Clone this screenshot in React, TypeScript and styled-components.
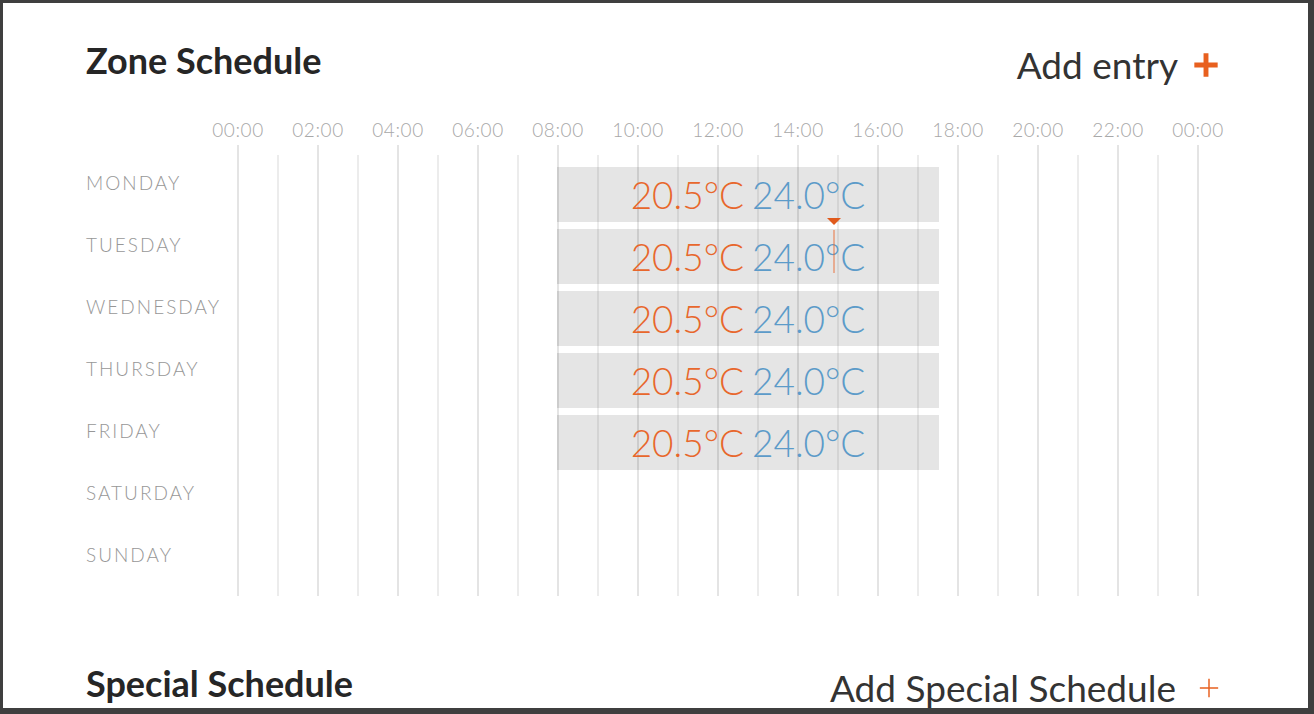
import React, { FC } from 'react';

import styled, { createGlobalStyle } from 'styled-components';

const HOUR = 40;

const GlobalStyle = createGlobalStyle`
  html, body {
    margin: 0;
    padding: 0;
    background: #ffffff;
  }

  body {
    font-family: Lato, 'Open Sans', 'Liberation Sans', sans-serif;
  }
`;

const Frame = styled.div`
  width: 1314px;
  height: 714px;
  box-sizing: border-box;
  border-style: solid;
  border-color: #3f3f3f;
  border-width: 3px 6px 6px 3px;
  padding: 0 88px 0 83px;
  overflow: hidden;
  background: #ffffff;
`;

const Header = styled.div<{ $top: number }>`
  display: flex;
  justify-content: space-between;
  align-items: flex-start;
  margin-top: ${({ $top }) => $top}px;
`;

const Title = styled.h2`
  margin: 0;
  font-size: 36px;
  line-height: 42px;
  font-weight: 700;
  color: #262626;
`;

const AddButton = styled.button<{ $gap: number }>`
  display: flex;
  align-items: center;
  gap: ${({ $gap }) => $gap}px;
  padding: 5px 0 0 0;
  border: 0;
  background: none;
  font-family: inherit;
  font-size: 37px;
  line-height: 42px;
  color: #333333;
  cursor: pointer;
`;

const Schedule = styled.div`
  display: grid;
  grid-template-columns: 151px 962px;
  margin-top: 29px;
`;

const Axis = styled.div`
  grid-column: 2;
  display: grid;
  grid-template-columns: repeat(13, 80px);
  margin-left: -39px;
  height: 30px;
`;

const AxisLabel = styled.span`
  text-align: center;
  font-size: 19px;
  line-height: 30px;
  font-weight: 300;
  color: #a8a8a8;
  letter-spacing: 0.6px;
`;

const Days = styled.div`
  grid-column: 1;
  display: flex;
  flex-direction: column;
  padding-top: 22px;
`;

const DayLabel = styled.div`
  height: 62px;
  padding-top: 4px;
  box-sizing: border-box;
  font-size: 19px;
  line-height: 24px;
  font-weight: 300;
  color: #979797;
  letter-spacing: 2px;
`;

const Timeline = styled.div`
  grid-column: 2;
  position: relative;
  height: 451px;
  padding-top: 22px;
  box-sizing: border-box;
  background-image: repeating-linear-gradient(
      to right,
      #e4e4e4 0,
      #e4e4e4 2px,
      transparent 2px,
      transparent 80px
    ),
    repeating-linear-gradient(
      to right,
      #ececec 0,
      #ececec 2px,
      transparent 2px,
      transparent 80px
    );
  background-repeat: no-repeat;
  background-size: 100% 100%, 100% calc(100% - 10px);
  background-position: 0 0, 40px 10px;
`;

const Row = styled.div`
  height: 62px;
`;

const Bar = styled.div`
  height: 55px;
  background: rgba(0, 0, 0, 0.1);
  display: flex;
  justify-content: center;
  align-items: center;
  gap: 8px;
  font-size: 37px;
  font-weight: 300;
  line-height: 55px;
`;

const Temp = styled.span<{ $tone: 'warm' | 'cool' }>`
  color: ${({ $tone }) => ($tone === 'warm' ? '#e8672c' : '#5c9bc9')};
`;

const NowMarker = styled.div`
  position: absolute;
  top: 73px;
  width: 14px;
  margin-left: -6px;
  display: flex;
  flex-direction: column;
  align-items: center;
  pointer-events: none;
`;

const Pointer = styled.div`
  width: 0;
  height: 0;
  border-left: 7px solid transparent;
  border-right: 7px solid transparent;
  border-top: 7px solid #e05a1c;
`;

const Stem = styled.div`
  width: 2px;
  height: 43px;
  margin-top: 5px;
  background: rgba(232, 103, 44, 0.45);
`;

const PlusIcon: FC<{ weight: number; size: number }> = ({ weight, size }) => (
  <svg width={size} height={size} viewBox="0 0 24 24" fill="none">
    <path d="M12 2v20M2 12h20" stroke="#e8601f" strokeWidth={weight} />
  </svg>
);

const hours = Array.from({ length: 13 }).map((_, i) => `${String((i * 2) % 24).padStart(2, '0')}:00`);

const days = ['MONDAY', 'TUESDAY', 'WEDNESDAY', 'THURSDAY', 'FRIDAY', 'SATURDAY', 'SUNDAY'];

type Entry = { start: number; end: number; low: string; high: string } | null;

const entries: Entry[] = [
  { start: 8, end: 17.55, low: '20.5°C', high: '24.0°C' },
  { start: 8, end: 17.55, low: '20.5°C', high: '24.0°C' },
  { start: 8, end: 17.55, low: '20.5°C', high: '24.0°C' },
  { start: 8, end: 17.55, low: '20.5°C', high: '24.0°C' },
  { start: 8, end: 17.55, low: '20.5°C', high: '24.0°C' },
  null,
  null,
];

const now = 14.9;

const App: FC = () => {
  return (
    <>
      <GlobalStyle />
      <Frame>
        <Header $top={36}>
          <Title>Zone Schedule</Title>
          <AddButton $gap={14}>
            Add entry
            <PlusIcon weight={4.2} size={28} />
          </AddButton>
        </Header>

        <Schedule>
          <Axis>
            {hours.map((h, i) => (
              // eslint-disable-next-line react/no-array-index-key
              <AxisLabel key={i}>{h}</AxisLabel>
            ))}
          </Axis>
          <Days>
            {days.map((d) => (
              <DayLabel key={d}>{d}</DayLabel>
            ))}
          </Days>
          <Timeline>
            {entries.map((e, i) => (
              // eslint-disable-next-line react/no-array-index-key
              <Row key={i}>
                {e && (
                  <Bar
                    style={{
                      marginLeft: e.start * HOUR,
                      width: (e.end - e.start) * HOUR,
                    }}
                  >
                    <Temp $tone="warm">{e.low}</Temp>
                    <Temp $tone="cool">{e.high}</Temp>
                  </Bar>
                )}
              </Row>
            ))}
            <NowMarker style={{ left: now * HOUR }}>
              <Pointer />
              <Stem />
            </NowMarker>
          </Timeline>
        </Schedule>

        <Header $top={61}>
          <Title>Special Schedule</Title>
          <AddButton $gap={22}>
            Add Special Schedule
            <PlusIcon weight={1.6} size={22} />
          </AddButton>
        </Header>
      </Frame>
    </>
  );
};

export default App;
